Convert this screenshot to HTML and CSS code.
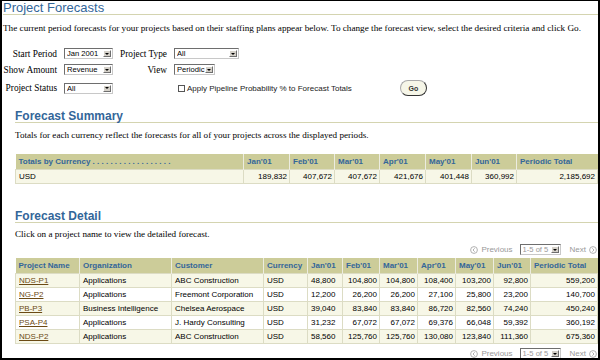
FILE: index.html
```html
<!DOCTYPE html>
<html lang="en">
<head>
    <meta charset="UTF-8">
    <meta name="viewport" content="width=device-width, initial-scale=1.0">
    <title>Project Forecasts</title>

    <link rel="stylesheet" href="styles.css">

</head>
<body>
    <div class="page">
        <h1 class="page_title">Project Forecasts</h1>
        <p class="intro">The current period forecasts for your projects based on their staffing plans appear below. To change the forecast view, select the desired criteria and click Go.</p>

        <div class="filters">
            <span class="label">Start Period</span>
            <span class="select sel_period"><span class="select_text">Jan 2001</span><span class="select_arrow"></span></span>
            <span class="label">Project Type</span>
            <span class="select sel_type"><span class="select_text">All</span><span class="select_arrow"></span></span>

            <span class="label">Show Amount</span>
            <span class="select sel_period"><span class="select_text">Revenue</span><span class="select_arrow"></span></span>
            <span class="label">View</span>
            <span class="select sel_view"><span class="select_text">Periodic</span><span class="select_arrow"></span></span>

            <span class="label">Project Status</span>
            <span class="select sel_period"><span class="select_text">All</span><span class="select_arrow"></span></span>
            <span></span>
            <div class="pipeline">
                <span class="checkbox"></span>
                <span class="pipeline_text">Apply Pipeline Probability % to Forecast Totals</span>
                <span class="go_btn">Go</span>
            </div>
        </div>

        <div class="section">
            <h2 class="section_title">Forecast Summary</h2>
            <p class="section_text">Totals for each currency reflect the forecasts for all of your projects across the displayed periods.</p>
            <table class="data">
                <colgroup>
                    <col class="c228"><col class="c46"><col class="c45"><col class="c45"><col class="c46"><col class="c46"><col class="c45"><col>
                </colgroup>
                <tr>
                    <th>Totals by Currency . . . . . . . . . . . . . . . . . .</th>
                    <th>Jan'01</th><th>Feb'01</th><th>Mar'01</th><th>Apr'01</th><th>May'01</th><th>Jun'01</th><th>Periodic Total</th>
                </tr>
                <tr class="odd">
                    <td>USD</td>
                    <td class="num">189,832</td><td class="num">407,672</td><td class="num">407,672</td><td class="num">421,676</td><td class="num">401,448</td><td class="num">360,992</td><td class="num">2,185,692</td>
                </tr>
            </table>
        </div>

        <div class="section detail">
            <h2 class="section_title">Forecast Detail</h2>
            <p class="section_text">Click on a project name to view the detailed forecast.</p>

            <div class="pager">
                <svg class="pager_icon" width="8" height="8" viewBox="0 0 8 8"><circle cx="4" cy="4" r="3.4" fill="none" stroke="#a8a8a8" stroke-width="0.9"/><path d="M4.7 2.3 L3 4 L4.7 5.7" fill="none" stroke="#a8a8a8" stroke-width="0.9"/></svg>
                <span class="pager_text">Previous</span>
                <span class="select sel_page"><span class="select_text">1-5 of 5</span><span class="select_arrow"></span></span>
                <span class="pager_text next">Next</span>
                <svg class="pager_icon" width="8" height="8" viewBox="0 0 8 8"><circle cx="4" cy="4" r="3.4" fill="none" stroke="#a8a8a8" stroke-width="0.9"/><path d="M3.3 2.3 L5 4 L3.3 5.7" fill="none" stroke="#a8a8a8" stroke-width="0.9"/></svg>
            </div>

            <table class="data">
                <colgroup>
                    <col class="c64"><col class="c92"><col class="c92"><col class="c44"><col class="c35"><col class="c37"><col class="c38"><col class="c38"><col class="c38"><col class="c37"><col>
                </colgroup>
                <tr>
                    <th>Project Name</th><th>Organization</th><th>Customer</th><th>Currency</th>
                    <th>Jan'01</th><th>Feb'01</th><th>Mar'01</th><th>Apr'01</th><th>May'01</th><th>Jun'01</th><th>Periodic Total</th>
                </tr>
                <tr class="odd">
                    <td><a href="#">NDS-P1</a></td><td>Applications</td><td>ABC Construction</td><td>USD</td>
                    <td>48,800</td><td class="num">104,800</td><td class="num">104,800</td><td class="num">108,400</td><td class="num">103,200</td><td class="num">92,800</td><td class="num">559,200</td>
                </tr>
                <tr>
                    <td><a href="#">NG-P2</a></td><td>Applications</td><td>Freemont Corporation</td><td>USD</td>
                    <td>12,200</td><td class="num">26,200</td><td class="num">26,200</td><td class="num">27,100</td><td class="num">25,800</td><td class="num">23,200</td><td class="num">140,700</td>
                </tr>
                <tr class="odd">
                    <td><a href="#">PB-P3</a></td><td>Business Intelligence</td><td>Chelsea Aerospace</td><td>USD</td>
                    <td>39,040</td><td class="num">83,840</td><td class="num">83,840</td><td class="num">86,720</td><td class="num">82,560</td><td class="num">74,240</td><td class="num">450,240</td>
                </tr>
                <tr>
                    <td><a href="#">PSA-P4</a></td><td>Applications</td><td>J. Hardy Consulting</td><td>USD</td>
                    <td>31,232</td><td class="num">67,072</td><td class="num">67,072</td><td class="num">69,376</td><td class="num">66,048</td><td class="num">59,392</td><td class="num">360,192</td>
                </tr>
                <tr class="odd">
                    <td><a href="#">NDS-P2</a></td><td>Applications</td><td>ABC Construction</td><td>USD</td>
                    <td>58,560</td><td class="num">125,760</td><td class="num">125,760</td><td class="num">130,080</td><td class="num">123,840</td><td class="num">111,360</td><td class="num">675,360</td>
                </tr>
            </table>

            <div class="pager pager_bottom">
                <svg class="pager_icon" width="8" height="8" viewBox="0 0 8 8"><circle cx="4" cy="4" r="3.4" fill="none" stroke="#a8a8a8" stroke-width="0.9"/><path d="M4.7 2.3 L3 4 L4.7 5.7" fill="none" stroke="#a8a8a8" stroke-width="0.9"/></svg>
                <span class="pager_text">Previous</span>
                <span class="select sel_page"><span class="select_text">1-5 of 5</span><span class="select_arrow"></span></span>
                <span class="pager_text next">Next</span>
                <svg class="pager_icon" width="8" height="8" viewBox="0 0 8 8"><circle cx="4" cy="4" r="3.4" fill="none" stroke="#a8a8a8" stroke-width="0.9"/><path d="M3.3 2.3 L5 4 L3.3 5.7" fill="none" stroke="#a8a8a8" stroke-width="0.9"/></svg>
            </div>
        </div>
    </div>
</body>
</html>
```

FILE: styles.css
```css
* {
    margin: 0;
    padding: 0;
}

html, body {
    width: 600px;
    height: 360px;
    background-color: #fff;
    color: #000;
    overflow: hidden;
}

/* 바깥 검은 테두리 */
.page {
    width: 600px;
    height: 360px;
    box-sizing: border-box;
    border: 2px solid #000;
    border-top-width: 1px;
    overflow: hidden;
    font-family: "Liberation Serif", "Times New Roman", serif;
}

.page_title {
    margin-left: 1px;
    height: 13px;
    line-height: 13px;
    font-family: "Liberation Sans", Arial, sans-serif;
    font-size: 13px;
    font-weight: normal;
    color: #336699;
    border-bottom: 1px solid #d4d4b0;
}

.intro {
    margin: 8px 0 0 1px;
    font-size: 9.2px;
    line-height: 11px;
    white-space: nowrap;
}

/* 검색 조건 */
.filters {
    margin: 14px 0 0 3px;
    display: grid;
    grid-template-columns: 53px 49px 49px 1fr;
    column-gap: 6px;
    row-gap: 5px;
    align-items: center;
    font-size: 9.3px;
}

.label {
    justify-self: end;
    padding-right: 1px;
    white-space: nowrap;
}

.select {
    justify-self: start;
    display: inline-flex;
    align-items: center;
    height: 11px;
    box-sizing: border-box;
    border: 1px solid #6e6e6e;
    border-right-color: #c8c8c8;
    border-bottom-color: #c8c8c8;
    background-color: #fff;
    padding: 0 1px 0 2px;
    font-family: "Liberation Sans", Arial, sans-serif;
    font-size: 7.6px;
    line-height: 9px;
    white-space: nowrap;
}

.select_text {
    flex: 1;
    overflow: hidden;
}

.select_arrow {
    display: flex;
    flex-shrink: 0;
    justify-content: center;
    align-items: center;
    width: 8px;
    height: 7px;
    box-sizing: border-box;
    background-color: #d4d0c8;
    border: 1px solid #fff;
    border-right-color: #6e6e6e;
    border-bottom-color: #6e6e6e;
}

.select_arrow::after {
    content: "";
    border-left: 2px solid transparent;
    border-right: 2px solid transparent;
    border-top: 2px solid #000;
}

.sel_period { width: 49px; }
.sel_type { width: 65px; }
.sel_view { width: 41px; }
.sel_page { width: 41px; }

.pipeline {
    display: flex;
    align-items: center;
    font-family: "Liberation Sans", Arial, sans-serif;
    font-size: 8px;
    color: #222;
}

.checkbox {
    width: 7px;
    height: 7px;
    box-sizing: border-box;
    margin-left: 4px;
    margin-right: 2px;
    border: 1px solid #555;
    background-color: #fff;
}

.go_btn {
    display: flex;
    justify-content: center;
    align-items: center;
    width: 27px;
    height: 16px;
    box-sizing: border-box;
    margin-left: 48px;
    border: 1px solid #aaa;
    border-right-color: #333;
    border-bottom-color: #333;
    border-radius: 8px;
    background-color: #f6f6e8;
    font-size: 7px;
    font-weight: bold;
    color: #333;
}

/* 섹션 */
.section {
    margin: 14px 0 0 13px;
}

.section.detail {
    margin-top: 26px;
}

.section_title {
    height: 12px;
    line-height: 12px;
    font-family: "Liberation Sans", Arial, sans-serif;
    font-size: 12px;
    font-weight: bold;
    color: #336699;
    border-bottom: 1px solid #d4d4b0;
}

.section_text {
    margin-top: 7px;
    font-size: 9.15px;
    line-height: 11px;
    white-space: nowrap;
}

.detail .section_text {
    margin-top: 6px;
}

/* 표 */
.data {
    margin-top: 13px;
    width: 583px;
    border-collapse: collapse;
    table-layout: fixed;
    font-family: "Liberation Sans", Arial, sans-serif;
    font-size: 8px;
}

.detail .data {
    margin-top: 3px;
}

.c228 { width: 228px; }
.c92 { width: 92px; }
.c64 { width: 64px; }
.c46 { width: 46px; }
.c45 { width: 45px; }
.c44 { width: 44px; }
.c38 { width: 38px; }
.c37 { width: 37px; }
.c35 { width: 35px; }

.data th {
    height: 15px;
    padding: 0 2px 0 3px;
    background-color: #cccc99;
    color: #336699;
    font-weight: bold;
    text-align: left;
    white-space: nowrap;
    overflow: hidden;
    border-left: 1px solid #ecece0;
}

.data th:first-child {
    border-left: none;
}

.data td {
    height: 13px;
    padding: 0 2px 0 3px;
    border: 1px solid #dcdcc4;
    white-space: nowrap;
    overflow: hidden;
}

.data tr.odd td {
    background-color: #f7f7e7;
}

.data td.num {
    text-align: right;
}

.data a {
    color: #6b4a14;
}

/* 페이지 이동 */
.pager {
    margin-top: 4px;
    height: 11px;
    display: flex;
    justify-content: flex-end;
    align-items: center;
    padding-right: 1px;
    font-family: "Liberation Sans", Arial, sans-serif;
    font-size: 8px;
    color: #999;
}

.pager_bottom {
    margin-top: 4px;
}

.pager_icon {
    display: block;
}

.pager_text {
    margin: 0 7px 0 3px;
}

.pager_text.next {
    margin: 0 3px 0 9px;
}
```
